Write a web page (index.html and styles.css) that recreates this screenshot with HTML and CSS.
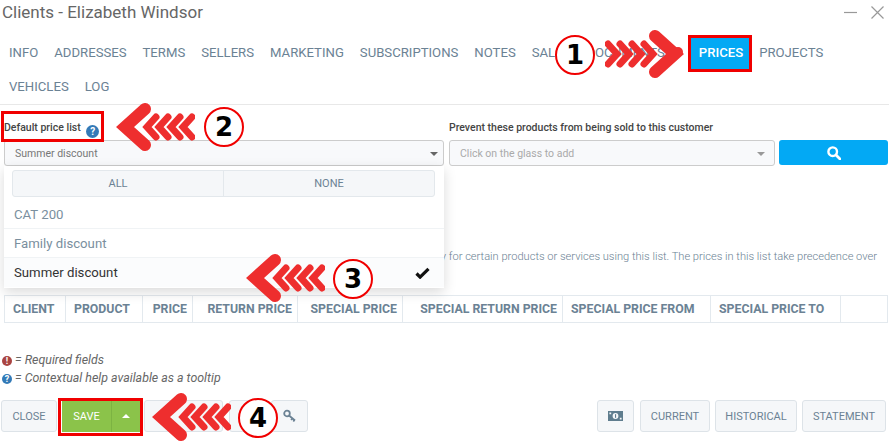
FILE: index.html
```html
<!DOCTYPE html>
<html lang="en">
<head>
    <meta charset="UTF-8">
    <meta name="viewport" content="width=device-width, initial-scale=1.0">
    <title>Clients - Elizabeth Windsor</title>
    <link rel="stylesheet" href="styles.css">
</head>
<body>
    <svg class="defs" aria-hidden="true">
        <symbol id="arrow" viewBox="0 0 80 48">
            <g fill="none" stroke="#ee2e2e" stroke-width="7" stroke-linecap="round" stroke-linejoin="miter">
                <polyline points="3,14 12,24 3,34"/>
                <polyline points="15,14 24,24 15,34"/>
                <polyline points="27,14 36,24 27,34"/>
                <polyline points="39,14 48,24 39,34"/>
                <polyline points="50,6 70,24 50,42" stroke-width="12"/>
            </g>
        </symbol>
    </svg>

    <div class="window">
        <!-- title bar -->
        <div class="title-bar">
            <span class="title">Clients - Elizabeth Windsor</span>
            <div class="win-controls">
                <svg width="13" height="13" viewBox="0 0 13 13"><path d="M0 6.5h13" stroke="#999" stroke-width="1.2"/></svg>
                <svg width="13" height="13" viewBox="0 0 13 13"><path d="M.5.5l12 12M12.5.5l-12 12" stroke="#999" stroke-width="1.2"/></svg>
            </div>
        </div>

        <!-- tabs -->
        <nav class="tabs">
            <a class="tab">INFO</a>
            <a class="tab">ADDRESSES</a>
            <a class="tab">TERMS</a>
            <a class="tab">SELLERS</a>
            <a class="tab">MARKETING</a>
            <a class="tab">SUBSCRIPTIONS</a>
            <a class="tab">NOTES</a>
            <a class="tab">SALES</a>
            <a class="tab">DOCUMENTS<span class="tab-badge"></span></a>
            <a class="tab tab-active">PRICES</a>
            <a class="tab">PROJECTS</a>
            <a class="tab">VEHICLES</a>
            <a class="tab">LOG</a>
        </nav>

        <div class="content">
            <div class="form-row">
                <div class="field field-list">
                    <label class="form-label">Default price list <span class="help-icon">?</span></label>
                    <div class="select">
                        <span>Summer discount</span>
                        <span class="caret"></span>
                    </div>

                    <!-- open dropdown -->
                    <div class="dropdown">
                        <div class="dropdown-actions">
                            <button class="dropdown-btn">ALL</button>
                            <button class="dropdown-btn">NONE</button>
                        </div>
                        <div class="dropdown-item">CAT 200</div>
                        <div class="dropdown-item">Family discount</div>
                        <div class="dropdown-item dropdown-item-selected">
                            <span>Summer discount</span>
                            <svg width="15" height="12" viewBox="0 0 15 12"><path d="M1.5 6.5l3.6 3.6L13.5 1.8" fill="none" stroke="#111" stroke-width="3.2"/></svg>
                        </div>
                    </div>
                </div>

                <div class="field field-block">
                    <label class="form-label">Prevent these products from being sold to this customer</label>
                    <div class="select-group">
                        <div class="select select-empty">
                            <span>Click on the glass to add</span>
                            <span class="caret caret-light"></span>
                        </div>
                        <button class="search-btn">
                            <svg width="14" height="14" viewBox="0 0 14 14"><circle cx="5.7" cy="5.7" r="4.3" fill="none" stroke="#fff" stroke-width="2.4"/><path d="M9 9l4 4" stroke="#fff" stroke-width="2.8" stroke-linecap="round"/></svg>
                        </button>
                    </div>
                </div>
            </div>

            <p class="list-note">You can set a special price for this customer only for certain products or services using this list. The prices in this list take precedence over</p>

            <table class="price-table">
                <colgroup>
                    <col class="col-client"><col class="col-product"><col class="col-price"><col class="col-return"><col class="col-special"><col class="col-special-return"><col class="col-from"><col class="col-to"><col>
                </colgroup>
                <thead>
                    <tr>
                        <th>CLIENT</th>
                        <th>PRODUCT</th>
                        <th class="num">PRICE</th>
                        <th class="num">RETURN PRICE</th>
                        <th class="num">SPECIAL PRICE</th>
                        <th class="num">SPECIAL RETURN PRICE</th>
                        <th>SPECIAL PRICE FROM</th>
                        <th>SPECIAL PRICE TO</th>
                        <th></th>
                    </tr>
                </thead>
            </table>

            <div class="legend">
                <div><span class="legend-icon legend-required">!</span> = Required fields</div>
                <div><span class="legend-icon legend-help">?</span> = Contextual help available as a tooltip</div>
            </div>
        </div>

        <!-- footer buttons -->
        <div class="footer">
            <div class="footer-left">
                <button class="btn btn-close">CLOSE</button>
                <div class="save-group">
                    <button class="btn-save">SAVE</button>
                    <button class="btn-save-more"><span class="caret-up"></span></button>
                </div>
                <button class="btn btn-hidden"></button>
                <button class="btn btn-hidden-small"></button>
                <button class="btn btn-icon">
                    <svg width="14" height="14" viewBox="0 0 14 14"><circle cx="4" cy="4.5" r="2.8" fill="none" stroke="#6b8294" stroke-width="1.8"/><path d="M6 6.5l6 5M9.5 9.4l-1.4 1.6M11.5 11l-1.2 1.5" fill="none" stroke="#6b8294" stroke-width="1.8"/></svg>
                </button>
            </div>
            <div class="footer-right">
                <button class="btn btn-money">
                    <svg width="15" height="10" viewBox="0 0 15 10"><path fill="#5f7d8e" fill-rule="evenodd" d="M0 0h15v10H0zM4.6 5a2.9 2.9 0 1 0 5.8 0 2.9 2.9 0 1 0-5.8 0zM1.4 1.4v1.8h1.8V1.4zM11.8 6.8v1.8h1.8V6.8z"/><rect x="7" y="3.2" width="1.1" height="3.6" fill="#5f7d8e"/></svg>
                </button>
                <button class="btn btn-current">CURRENT</button>
                <button class="btn btn-historical">HISTORICAL</button>
                <button class="btn btn-statement">STATEMENT</button>
            </div>
        </div>
    </div>

    <!-- tutorial marks over the screenshot -->
    <div class="mark-box mark-box-prices"></div>
    <div class="mark-box mark-box-label"></div>
    <div class="mark-box mark-box-save"></div>

    <svg class="mark-arrow mark-arrow-1"><use href="#arrow"/></svg>
    <svg class="mark-arrow mark-arrow-2"><use href="#arrow"/></svg>
    <svg class="mark-arrow mark-arrow-3"><use href="#arrow"/></svg>
    <svg class="mark-arrow mark-arrow-4"><use href="#arrow"/></svg>

    <div class="mark-num mark-num-1">1</div>
    <div class="mark-num mark-num-2">2</div>
    <div class="mark-num mark-num-3">3</div>
    <div class="mark-num mark-num-4">4</div>
</body>
</html>
```
FILE: styles.css
```css
* {
    margin: 0;
    padding: 0;
    box-sizing: border-box;
}

body {
    font-family: Roboto, 'Liberation Sans', sans-serif;
    background: white;
    width: 889px;
    height: 443px;
    overflow: hidden;
    position: relative;
}

button {
    font-family: inherit;
}

.defs {
    position: absolute;
    width: 0;
    height: 0;
}

.window {
    height: 443px;
    display: flex;
    flex-direction: column;
}

/* title bar */
.title-bar {
    height: 35px;
    display: flex;
    justify-content: space-between;
    padding: 2px 5px 0 2px;
}

.title {
    font-size: 17px;
    line-height: 20px;
    color: #666;
}

.win-controls {
    display: flex;
    gap: 14px;
    padding-top: 4px;
}

/* tabs */
.tabs {
    display: flex;
    flex-wrap: wrap;
    align-content: flex-start;
    padding-left: 1px;
    height: 70px;
    border-bottom: 1px solid #e8e8e8;
}

.tab {
    display: flex;
    align-items: center;
    height: 34px;
    padding: 0 8px;
    font-size: 13.15px;
    color: #6b8294;
}

.tab-badge {
    width: 10px;
    height: 10px;
    margin-left: 8px;
    border-radius: 50%;
    background: #ee2e2e;
}

.tab-active {
    height: 37px;
    margin-bottom: -3px;
    padding-bottom: 3px;
    background: #03a9f4;
    color: white;
    font-weight: 500;
}

/* form */
.content {
    padding: 0 1px 0 4px;
}

.form-row {
    display: flex;
    gap: 5px;
    padding-top: 16px;
}

.field {
    position: relative;
}

.field-list {
    width: 440px;
}

.field-block {
    width: 439px;
}

.form-label {
    display: block;
    height: 19px;
    font-size: 10.5px;
    line-height: 14px;
    font-weight: 500;
    color: #444;
}

.help-icon {
    display: inline-block;
    width: 13px;
    height: 13px;
    margin-left: 3px;
    border-radius: 50%;
    background: #337ab7;
    color: white;
    font-size: 10px;
    line-height: 13px;
    font-weight: 700;
    text-align: center;
    vertical-align: -4px;
}

.select {
    display: flex;
    align-items: center;
    justify-content: space-between;
    height: 26px;
    padding: 1px 5px 0 10px;
    background: #f8f9fb;
    border: 1px solid #ccc;
    border-radius: 3px;
    font-size: 10.5px;
    color: #777;
}

.select-group {
    display: flex;
    gap: 4px;
}

.select-empty {
    width: 326px;
    color: #aaa;
}

.caret {
    width: 0;
    height: 0;
    border-left: 4px solid transparent;
    border-right: 4px solid transparent;
    border-top: 4px solid #666;
}

.caret-light {
    border-top-color: #999;
    margin-right: 4px;
}

.search-btn {
    width: 109px;
    height: 25px;
    display: flex;
    align-items: center;
    justify-content: center;
    background: #03a9f4;
    border: none;
    border-radius: 3px;
}

/* dropdown */
.dropdown {
    position: absolute;
    top: 45px;
    left: 0;
    width: 440px;
    height: 122px;
    padding-top: 4px;
    background: white;
    box-shadow: 0 4px 12px rgba(0,0,0,0.15);
    z-index: 10;
}

.dropdown-actions {
    display: flex;
    margin: 0 9px 3px 8px;
    height: 27px;
    background: #f5f7f9;
    border: 1px solid #e3e8ec;
    border-radius: 3px;
}

.dropdown-btn {
    flex: 1;
    background: none;
    border: none;
    font-size: 11px;
    color: #6b8294;
}

.dropdown-btn + .dropdown-btn {
    border-left: 1px solid #e3e8ec;
}

.dropdown-item {
    display: flex;
    align-items: center;
    justify-content: space-between;
    height: 29px;
    padding: 0 14px 0 10px;
    font-size: 13.2px;
    color: #7a8f9e;
    border-bottom: 1px solid #f0f3f5;
}

.dropdown-item-selected {
    color: #333;
    background: #fbfcfd;
    border-bottom: none;
}

/* note and table */
.list-note {
    display: flex;
    justify-content: flex-end;
    margin-top: 82px;
    padding-right: 11px;
    height: 17px;
    overflow: hidden;
    white-space: nowrap;
    font-size: 11.1px;
    line-height: 17px;
    font-weight: 300;
    color: #6b8294;
}

.price-table {
    width: 884px;
    margin-top: 30px;
    border-collapse: collapse;
    table-layout: fixed;
}

.price-table th {
    height: 27px;
    padding: 0 5px 0 8px;
    border: 1px solid #e3e9ee;
    font-size: 12.3px;
    font-weight: 700;
    color: #6b8294;
    text-align: left;
    white-space: nowrap;
    overflow: hidden;
}

.price-table th.num {
    text-align: right;
}

.col-client { width: 61px; }
.col-product { width: 77px; }
.col-price { width: 50px; }
.col-return { width: 105px; }
.col-special { width: 105px; }
.col-special-return { width: 160px; }
.col-from { width: 148px; }
.col-to { width: 130px; }

/* legend */
.legend {
    margin-top: 28px;
    margin-left: -2px;
    font-size: 12.4px;
    line-height: 18px;
    font-style: italic;
    color: #666;
}

.legend-icon {
    display: inline-block;
    width: 10px;
    height: 10px;
    border-radius: 50%;
    color: white;
    font-size: 9px;
    line-height: 10px;
    font-weight: 700;
    font-style: normal;
    text-align: center;
    vertical-align: 0;
}

.legend-required {
    background: #a94442;
}

.legend-help {
    background: #337ab7;
}

/* footer */
.footer {
    display: flex;
    justify-content: space-between;
    margin-top: 13px;
    padding: 0 3px 0 1px;
}

.footer-left,
.footer-right {
    display: flex;
    align-items: flex-start;
}

.btn {
    height: 32px;
    background: #f5f7f9;
    border: 1px solid #dde3e8;
    border-radius: 3px;
    font-size: 11px;
    color: #6b8294;
}

.btn-close { width: 56px; }
.btn-hidden { width: 79px; margin-left: 4px; }
.btn-hidden-small { width: 39px; margin-left: 6px; }
.btn-icon { width: 37px; margin-left: 3px; }
.btn-money { width: 37px; }
.btn-current { width: 70px; margin-left: 6px; }
.btn-historical { width: 82px; margin-left: 5px; }
.btn-statement { width: 84px; margin-left: 5px; }

.btn-icon,
.btn-money {
    display: flex;
    align-items: center;
    justify-content: center;
}

.save-group {
    display: flex;
    margin-left: 5px;
    height: 32px;
}

.btn-save,
.btn-save-more {
    background: #8bc34a;
    border: none;
    color: white;
    font-size: 11px;
}

.btn-save {
    width: 49px;
}

.btn-save-more {
    width: 29px;
    border-left: 1px solid #7cb342;
    display: flex;
    align-items: center;
    justify-content: center;
}

.caret-up {
    width: 0;
    height: 0;
    border-left: 4px solid transparent;
    border-right: 4px solid transparent;
    border-bottom: 4px solid white;
}

/* tutorial marks */
.mark-box {
    position: absolute;
    border: 3px solid #f00000;
    z-index: 20;
}

.mark-box-prices { left: 688px; top: 35px; width: 64px; height: 37px; }
.mark-box-label { left: 1px; top: 111px; width: 103px; height: 31px; }
.mark-box-save { left: 58px; top: 398px; width: 85px; height: 38px; }

.mark-arrow {
    position: absolute;
    width: 80px;
    height: 48px;
    z-index: 21;
}

.mark-arrow-1 { left: 605px; top: 30px; }
.mark-arrow-2 { left: 115px; top: 103px; transform: scaleX(-1); }
.mark-arrow-3 { left: 245px; top: 254px; transform: scaleX(-1); }
.mark-arrow-4 { left: 151px; top: 393px; transform: scaleX(-1); }

.mark-num {
    position: absolute;
    width: 40px;
    height: 40px;
    display: flex;
    align-items: center;
    justify-content: center;
    background: white;
    border: 2px solid #f00000;
    border-radius: 50%;
    font-family: 'DejaVu Sans', sans-serif;
    font-size: 26px;
    font-weight: 700;
    color: black;
    z-index: 22;
}

.mark-num-1 { left: 555px; top: 35px; }
.mark-num-2 { left: 204px; top: 107px; }
.mark-num-3 { left: 333px; top: 259px; }
.mark-num-4 { left: 238px; top: 398px; }
```
